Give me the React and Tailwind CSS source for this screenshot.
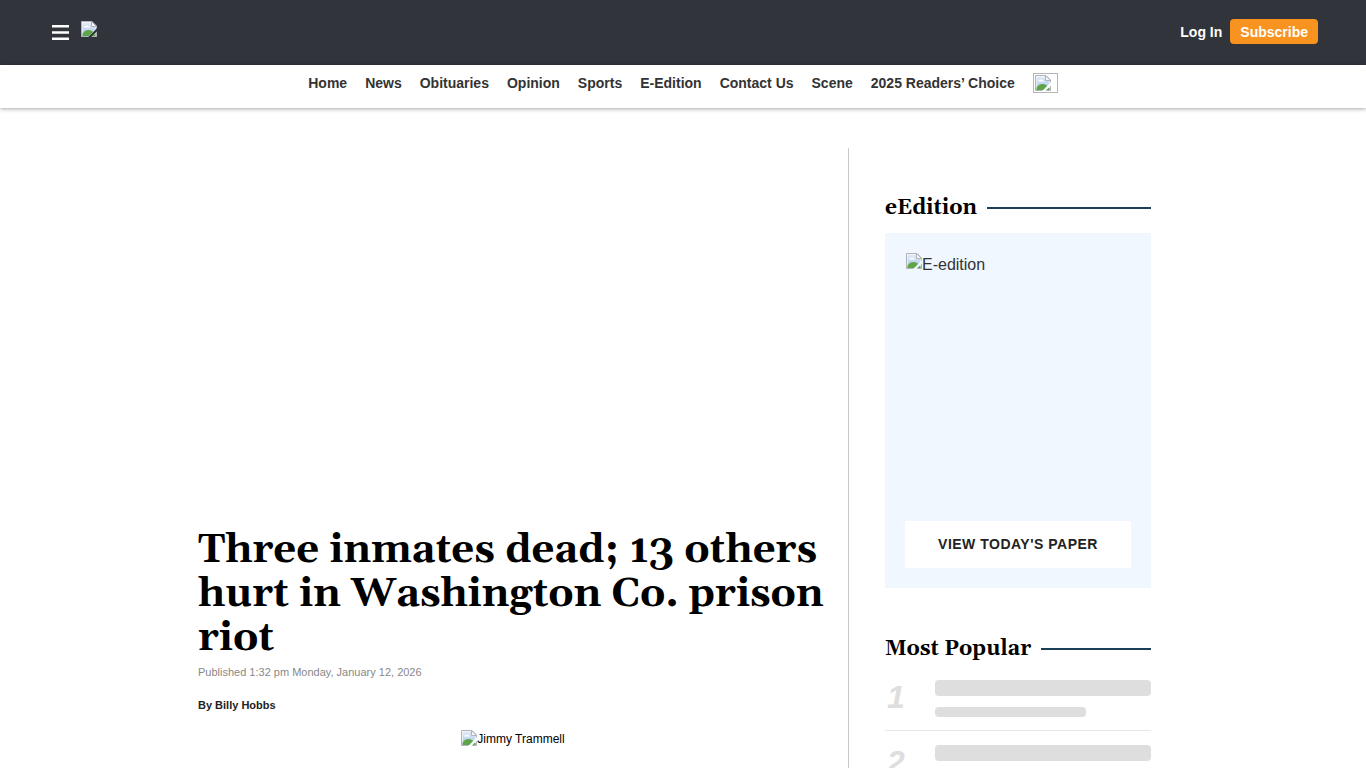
import { useId } from "react";

const navLinks = [
  "Home",
  "News",
  "Obituaries",
  "Opinion",
  "Sports",
  "E-Edition",
  "Contact Us",
  "Scene",
  "2025 Readers’ Choice",
];

function BrokenImage() {
  const id = useId();

  return (
    <svg viewBox="0 0 16 16" aria-hidden="true" className="w-4 h-4 shrink-0">
      <defs>
        <linearGradient id={id} x1="0" y1="0" x2="0" y2="1">
          <stop offset="0" stopColor="#e3ebf6" />
          <stop offset="1" stopColor="#a9c6ea" />
        </linearGradient>
        <clipPath id={id + "c"}>
          <path d="M0 0h16v7L7 16H0zM16 10.5V16h-5.5z" />
        </clipPath>
      </defs>
      <g clipPath={"url(#" + id + "c)"}>
        <path d="M.5.5h10.5l4.5 4.5v10.5H.5z" fill="#fff" stroke="#b0b3b8" />
        <path d="M1.500 1.500h9v4.500h4v9h-13z" fill={"url(#" + id + ")"} />
        <path d="M3 6.500c0-1 1-1.500 1.800-1.200C5.300 4.200 7.200 4.200 7.500 5.500c1 0 1.300.5 1.300 1H3z" fill="#fff" />
        <path d="M1.500 15v-2c1-2.500 3.500-4 6-4s5.500 1.500 7 4.500V15z" fill="#5fa548" />
        <path d="M10.500.5v5h5z" fill="#f4f6f8" stroke="#b0b3b8" />
      </g>
    </svg>
  );
}

function SectionTitle(props) {
  return (
    <h2 className="flex items-center gap-[10px] font-[Georgia,Gelasio,serif] text-[21px] leading-[26px] font-bold text-black">
      {props.children}
      <span className="flex-1 h-[2px] bg-[#1b3f56]" />
    </h2>
  );
}

function PopularItem(props) {
  return (
    <li className="flex h-[65px] pt-[14px] border-b border-[#e8e8e8]">
      <span className="w-[50px] shrink-0 pl-0.5 text-[32px] leading-[34px] font-bold italic text-[#dedede]">
        {props.rank}
      </span>
      <div className="flex-1">
        <div className="h-4 rounded bg-[#dedede]" />
        <div className="h-[10px] w-[70%] mt-[11px] rounded bg-[#dedede]" />
      </div>
    </li>
  );
}

function Header() {
  return (
    <header>
      <div className="h-[65px] bg-[#31343b] flex items-center justify-between pl-[52px] pr-12">
        <div className="flex items-center gap-3">
          <button aria-label="Menu">
            <svg viewBox="0 0 17 15" className="block w-[17px] h-[15px]" fill="#fff">
              <path d="M0 0h17v2.500H0zM0 6.250h17v2.500H0zM0 12.500h17V15H0z" />
            </svg>
          </button>
          <a href="#" aria-label="Home page" className="pb-2">
            <BrokenImage />
          </a>
        </div>
        <div className="flex items-center gap-2 pb-0.5 text-sm font-bold text-white">
          <a href="#">Log In</a>
          <button className="h-[25px] px-[10px] rounded bg-[#f7931e]">Subscribe</button>
        </div>
      </div>

      <nav className="h-[43px] pt-2 flex justify-center gap-[18px] bg-white shadow-[0_1px_4px_rgba(0,0,0,0.35)] text-sm font-bold text-[#333]">
        {navLinks.map((link) => (
          <a key={link} href="#">
            {link}
          </a>
        ))}
        <a
          href="#"
          aria-label="Search"
          className="w-[25px] h-5 border border-[#b5b5b5] pl-px pt-px overflow-hidden"
        >
          <BrokenImage />
        </a>
      </nav>
    </header>
  );
}

export default function App() {
  return (
    <div className="min-h-screen bg-white font-['Liberation_Sans',Arial,sans-serif] text-[#222]">
      <Header />

      <main className="max-w-[970px] mx-auto mt-10 flex">
        <article className="flex-1 pr-5 border-r border-[#c8c8c8]">
          {/* Ad slot */}
          <div className="h-[381px]" />

          <h1 className="font-[Georgia,Gelasio,serif] text-[40px] leading-[44px] font-bold text-black">
            Three inmates dead; 13 others hurt in Washington Co. prison riot
          </h1>
          <p className="mt-px text-[11px] leading-5 text-[#888]">
            Published 1:32 pm Monday, January 12, 2026
          </p>
          <p className="mt-[13px] text-[11px] leading-5 font-bold">By Billy Hobbs</p>

          <figure className="mt-[15px] flex justify-center items-start text-xs text-black">
            <BrokenImage />
            <span className="leading-[18px]">Jimmy Trammell</span>
          </figure>
        </article>

        <aside className="w-[319px] shrink-0 pl-9 pr-[17px] pt-[47px]">
          <SectionTitle>eEdition</SectionTitle>
          <div className="mt-3 p-5 bg-[#f0f7ff]">
            <div className="h-[268px] px-px flex items-start text-base text-[#333]">
              <BrokenImage />
              <span>E-edition</span>
            </div>
            <button className="w-full h-[47px] pb-0.5 bg-white text-sm font-bold tracking-[0.5px] text-[#222]">
              VIEW TODAY'S PAPER
            </button>
          </div>

          <div className="mt-12">
            <SectionTitle>Most Popular</SectionTitle>
            <ol className="mt-1">
              <PopularItem rank={1} />
              <PopularItem rank={2} />
            </ol>
          </div>
        </aside>
      </main>
    </div>
  );
}
